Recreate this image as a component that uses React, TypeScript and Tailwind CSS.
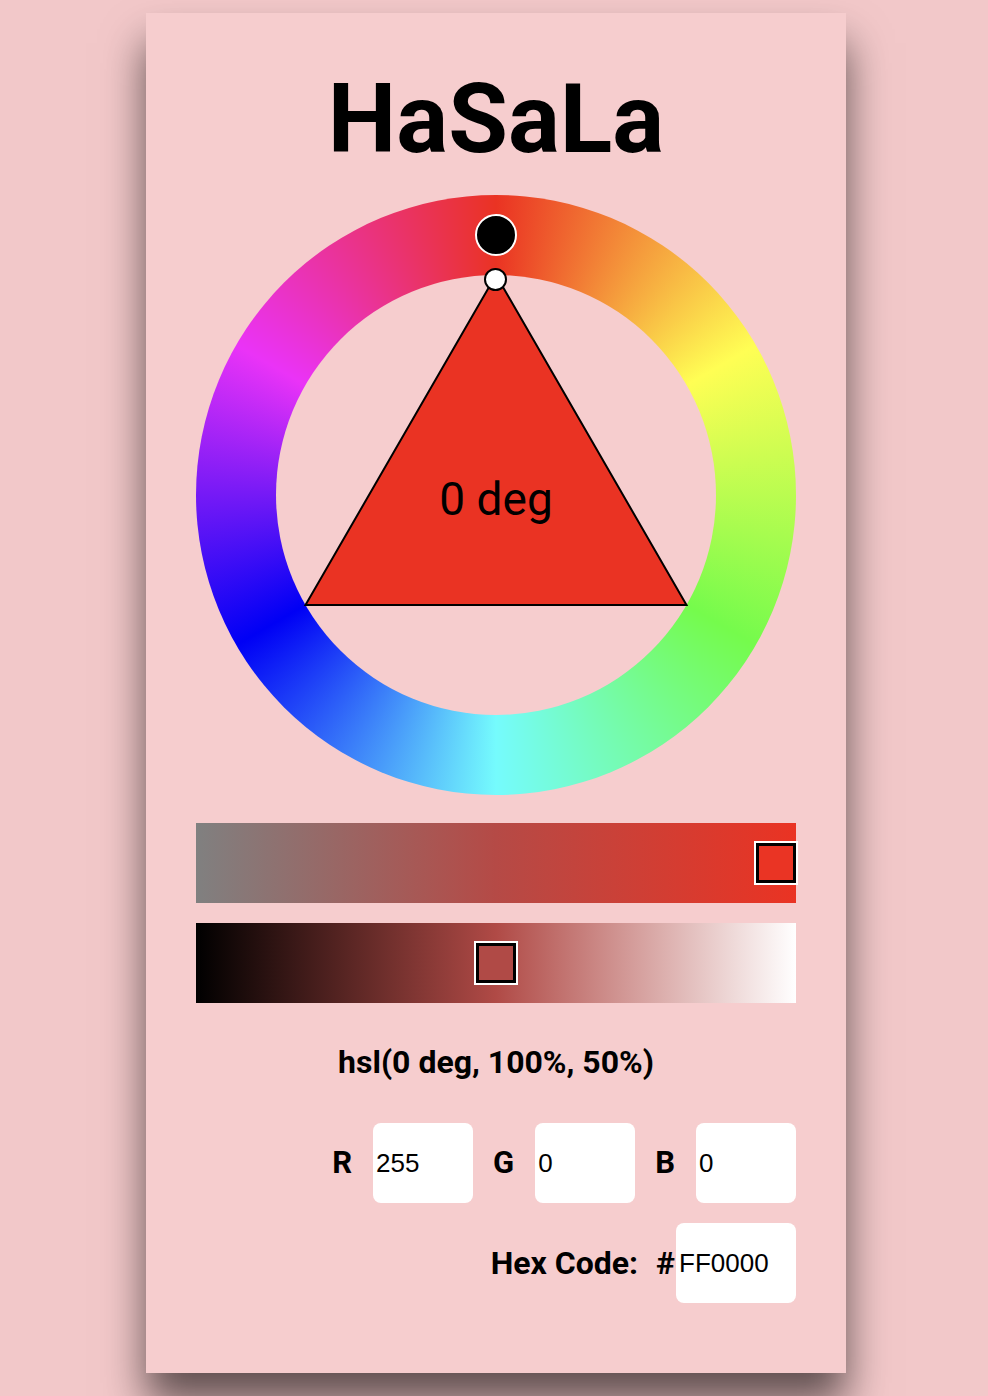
import { useState } from 'react';

const Handle = ({ className }: { className: string }) => (
  <div className={`absolute w-[44px] h-[44px] border-2 border-white ${className}`}>
    <div className="w-full h-full border-[3px] border-black bg-inherit" />
  </div>
);

export default function App() {
  const [rgb] = useState({ r: '255', g: '0', b: '0' });
  const [hex] = useState('FF0000');

  return (
    <div className="h-[1396px] overflow-hidden bg-[#f2c8c9] flex justify-center pt-[13px] pl-[4px] font-['Roboto',sans-serif] text-black">
      <div className="w-[700px] h-[1360px] shrink-0 bg-[#f6cdce] shadow-[0_30px_40px_rgba(0,0,0,0.6)] flex flex-col items-center px-[50px]">
        <h1 className="mt-[58px] text-[97px] leading-[96px] font-bold">HaSaLa</h1>

        <div className="relative mt-[28px] w-[600px] h-[600px] shrink-0 rounded-full bg-[conic-gradient(#ea3323,#fffe54,#75fb4c,#75fbfd,#0000f5,#ea33f7,#ea3323)]">
          <div className="absolute inset-[80px] rounded-full bg-[#f6cdce]" />
          <svg className="absolute inset-0" width="600" height="600" viewBox="0 0 600 600">
            <polygon points="300,80 109.5,410 490.5,410" fill="#ea3323" stroke="#000" strokeWidth="2" />
          </svg>
          <div className="absolute left-0 right-0 top-[276px] text-center text-[46px] leading-[56px]">0 deg</div>
          <div className="absolute left-[279px] top-[19px] w-[42px] h-[42px] rounded-full bg-black border-2 border-white" />
          <div className="absolute left-[288px] top-[73px] w-[23px] h-[23px] rounded-full bg-white border-2 border-black" />
        </div>

        <div className="relative mt-[28px] w-[600px] h-[80px] shrink-0 bg-[linear-gradient(to_right,#808080,#b54a46,#ea3323)]">
          <Handle className="left-[558px] top-[18px] bg-[#ea3424]" />
        </div>
        <div className="relative mt-[20px] w-[600px] h-[80px] shrink-0 bg-[linear-gradient(to_right,#000000,#b04a46,#ffffff)]">
          <Handle className="left-[278px] top-[18px] bg-[#b04a46]" />
        </div>

        <p className="mt-[39px] text-[32px] leading-[40px] font-bold">hsl(0 deg, 100%, 50%)</p>

        <div className="mt-[41px] w-full flex justify-end items-center gap-[20px]">
          {[
            ['R', rgb.r],
            ['G', rgb.g],
            ['B', rgb.b],
          ].map(([label, value]) => (
            <label key={label} className="flex items-center">
              <span className="text-[31px] font-bold mr-[21px]">{label}</span>
              <input
                className="w-[100px] h-[80px] rounded-[8px] bg-white pl-[3px] text-[26px] font-['Liberation_Sans',Arial,sans-serif] outline-none"
                defaultValue={value}
              />
            </label>
          ))}
        </div>

        <div className="mt-[20px] w-full flex justify-end items-center">
          <span className="text-[32px] font-bold">Hex Code:</span>
          <span className="text-[32px] font-bold ml-[18px] mr-[1px]">#</span>
          <input
            className="w-[120px] h-[80px] rounded-[8px] bg-white pl-[3px] text-[26px] font-['Liberation_Sans',Arial,sans-serif] outline-none"
            defaultValue={hex}
          />
        </div>
      </div>
    </div>
  );
}
